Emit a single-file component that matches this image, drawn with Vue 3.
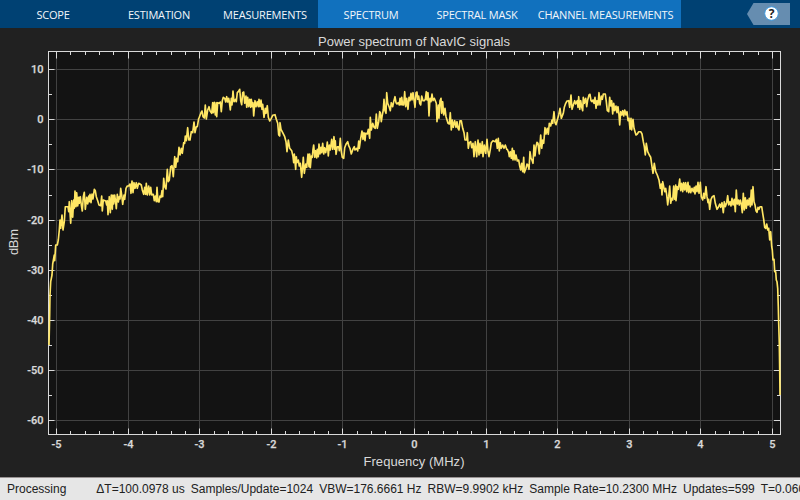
<script setup>
const tabs = [
  { label: 'SCOPE' },
  { label: 'ESTIMATION' },
  { label: 'MEASUREMENTS' },
  { label: 'SPECTRUM', context: true },
  { label: 'SPECTRAL MASK', context: true },
  { label: 'CHANNEL MEASUREMENTS', context: true, wide: true },
]

const status = [
  'ΔT=100.0978 us',
  'Samples/Update=1024',
  'VBW=176.6661 Hz',
  'RBW=9.9902 kHz',
  'Sample Rate=10.2300 MHz',
  'Updates=599',
  'T=0.0600',
]

const left = 48.5
const right = 780.5
const top = 51.5
const bottom = 434.5
const px = (f) => Math.floor(414.5 + f * 71.6) + 0.5
const py = (p) => Math.floor(119.8 - p * 5.014) + 0.5

const xMajor = Array.from({ length: 11 }, (_, i) => i - 5)
const yMajor = Array.from({ length: 8 }, (_, i) => 10 - i * 10)
const xMinor = Array.from({ length: 51 }, (_, i) => (i - 25) / 5).filter((v) => !Number.isInteger(v))
const yMinor = Array.from({ length: 7 }, (_, i) => 5 - i * 10)

// Trace sections: origin in pixels, samples in thirds of a pixel.
const sections = [
  [0, 200, '147,435 149,340 150,285 152,245 156,225 158,192 163,165 164,182 167,135 172,135 175,120'],
  [40, 80, '58,450 60,420 62,445 66,405 69,450 73,425 76,380 84,380 86,395 88,365 92,430 95,362 98,412 101,360 103,385 105,333 108,380 110,338 113,378 116,352 118,370 121,350 124,375 127,393 130,350 133,337 136,388 140,352 143,372 146,348 148,365 150,343 153,368 156,342 159,357 163,328 166,332 169,350 173,362 177,375 182,377 185,348 187,393 190,360 197,363 200,375 202,362 204,404 208,350 211,398 214,345 217,388 219,345 221,372 224,345 227,368 229,386 232,343 235,366 238,350 240,357 242,325 245,345 248,373 252,345 254,358 258,325 262,318 266,318 270,312 273,340 276,303 279,338 282,308 285,325 289,308 292,325 296,310 300,312 304,315 307,330 311,343 314,322 317,343 319,310 322,345 326,318 329,345 332,322 335,345 340,343 343,362 346,348 349,365 351,322 354,365 357,366 360,348 363,352 366,332 368,350 371,295 374,320 378,327 382,268 385,305 388,300 392,260 396,257 400,290 404,230 407,262 410,235 413,245 417,202 420,225 424,205 427,220 431,188 434,190 436,168 439,182 443,143 446,180 450,180 454,155 458,158 462,126 465,158 469,140 472,140 476,115'],
  [190, 80, '28,112 33,98 36,93 39,110 43,114 46,75 49,117 53,90 57,80 60,92 65,100 68,68 70,98 73,67 76,105 79,68 80,110 83,68 88,70 91,66 94,95 97,62 100,52 104,55 107,66 110,50 113,66 116,55 118,65 121,90 124,55 126,75 129,33 132,65 137,58 139,65 142,38 145,35 149,28 152,62 155,74 158,38 161,36 164,70 168,48 170,82 173,52 176,80 179,58 182,82 184,58 187,80 189,68 191,108 195,62 198,80 202,65 205,80 207,58 210,80 213,60 216,88 218,73 222,112 226,85 228,100 232,77 235,112 239,123 244,115 248,106 255,104 259,118 263,130 266,165 269,168 270,128 273,148 278,158 284,170 288,185 291,215 295,180 299,205 305,212 309,230 311,248 313,222 317,268 319,230 321,248 325,240 328,258 331,250 335,292 338,255 340,232 343,280 347,252 350,262 354,222 357,260 359,222 361,263 364,228 367,232 369,208 371,195 374,232 377,212 380,234 382,208 385,230 387,192 390,222 393,202 395,218 398,190 401,222 404,203 407,218 410,203 412,186 415,228 418,195 421,210 425,178 428,208 432,170 434,208 436,182 438,223 442,200 446,200 448,212 451,175 454,215 457,232 461,235 464,203 468,193 473,185 476,197 480,205 484,222 489,207 493,200 495,210 500,205 503,213 506,183 508,205 512,175 516,153 519,178 522,158 525,182 527,160 532,162 535,148 539,175 541,112 544,150 548,130 552,142 556,145 559,102 562,145 566,125 569,95'],
  [330, 80, '151,98 154,125 157,105 160,90 162,58 165,92 168,100 170,38 173,70 178,82 181,92 184,68 188,80 191,65 195,50 198,68 201,72 205,68 208,75 210,55 213,75 215,52 218,75 221,75 224,35 227,80 230,55 234,88 237,52 240,62 243,40 246,60 249,38 252,60 255,82 258,38 261,36 263,58 266,48 269,70 272,75 275,48 279,62 283,62 286,58 289,35 291,60 294,38 297,108 300,55 303,65 306,42 309,62 313,55 316,62 319,70 321,125 325,75 327,115 330,62 333,55 335,100 338,65 341,105 345,85 348,110 351,120 354,130 358,132 361,98 364,150 367,120 370,142 374,122 378,142 381,125 384,145 387,150 390,122 394,122 398,145 402,158 405,180 410,180 412,158 415,205 418,188 422,185 425,203 429,190 432,230 436,185 438,205 440,230 444,180 447,225 450,190 453,220 457,185 459,230 463,195 467,220 471,178 474,215 477,230 481,208 484,188 489,182 496,185 499,178 502,205 505,175 508,213 511,188 514,205 518,195 522,205 526,195 530,208'],
  [480, 80, '82,208 86,218 88,230 91,215 94,235 97,205 99,240 102,212 105,240 108,225 112,243 116,240 119,258 122,270 125,250 128,275 131,232 133,278 138,265 141,252 144,255 147,268 150,215 153,235 156,240 159,250 162,195 165,228 168,200 171,187 174,190 178,222 182,165 185,205 188,180 191,190 195,143 198,162 202,145 205,163 208,130 212,138 216,120 218,130 222,95 225,128 228,134 232,120 236,105 240,85 244,115 247,108 250,100 253,82 257,70 261,63 266,62 269,82 273,45 276,88 280,75 284,62 287,72 292,62 294,82 296,50 299,88 302,62 305,82 308,92 310,52 313,70 317,55 320,80 323,60 327,45 330,43 333,62 336,65 339,60 342,70 345,52 348,85 351,62 354,75 357,38 360,75 364,48 367,58 370,42 376,42 379,65 382,92 386,95 389,52 392,78 395,62 398,102 401,70 404,92 408,78 411,98 414,80 417,105 419,135 422,95 425,105 428,92 431,108 434,90 438,105 441,95 444,122 447,115 450,148 453,115 455,150 459,118 462,145 465,155 468,165 472,162 476,155 482,155 486,162 490,185 493,200 496,225 499,190 503,215 508,225 512,232 516,260 519,280 523,250 527,275 532,285 537,300 541,325 544,312 546,345 548,305 551,320 554,335 557,325 560,345 563,375'],
  [630, 150, '116,140 119,108 122,160 125,145 128,150 131,108 134,148 137,105 138,152 142,110 145,118 149,87 152,122 155,100 158,125 161,98 164,120 167,98 170,125 174,97 176,128 179,108 182,128 186,115 190,125 193,112 195,132 198,108 201,125 204,97 207,130 211,97 214,140 218,150 221,130 224,145 228,110 231,140 234,158 236,148 239,178 243,148 247,140 252,137 256,160 261,178 265,172 269,162 272,172 276,158 280,188 283,155 286,170 290,158 293,137 296,165 300,155 303,168 306,145 309,165 313,148 316,185 319,120 322,162 325,150 328,165 331,150 334,162 337,188 340,130 343,180 346,143 349,175 352,150 355,165 358,145 361,170 364,120 366,165 369,110 372,155 375,165 378,182 381,187 384,172 387,178 390,170 395,170 398,190 401,208 404,232 407,235 410,222 413,240 416,235 419,270 422,245 425,290'],
  [720, 210, '157,120 159,150 162,148 164,185 167,185 169,210 171,215 173,235 175,290 176,340 178,400 179,480 180,555'],
]

const trace = sections
  .flatMap(([ox, oy, samples]) =>
    samples.split(' ').map((s) => {
      const [x, y] = s.split(',').map(Number)
      return `${(ox + x / 3).toFixed(1)},${(oy + y / 3).toFixed(1)}`
    }),
  )
  .join(' ')
</script>

<template>
  <div class="window">
    <header class="toolstrip">
      <div
        v-for="tab in tabs"
        :key="tab.label"
        class="tab"
        :class="{ context: tab.context, wide: tab.wide }"
      >
        {{ tab.label }}
      </div>
      <div class="quick">
        <svg width="43" height="22" viewBox="0 0 43 22">
          <path d="M0 11 L6.5 0 H43 V22 H6.5 Z" fill="#668db0" />
          <circle cx="24.5" cy="10.5" r="6.8" fill="#fff" stroke="#3f9be0" stroke-width="1" />
          <text x="24.5" y="14.8" class="help" text-anchor="middle">?</text>
        </svg>
      </div>
    </header>

    <svg class="figure" width="800" height="449" viewBox="0 28 800 449">
      <rect :x="left" :y="top" :width="right - left" :height="bottom - top" fill="#131313" />
      <g class="grid">
        <line v-for="f in xMajor" :key="'gx' + f" :x1="px(f)" :x2="px(f)" :y1="top" :y2="bottom" />
        <line v-for="p in yMajor" :key="'gy' + p" :x1="left" :x2="right" :y1="py(p)" :y2="py(p)" />
      </g>
      <g class="axis">
        <rect :x="left" :y="top" :width="right - left" :height="bottom - top" fill="none" />
        <path v-for="f in xMajor" :key="'x' + f" :d="`M${px(f)} ${top}v7M${px(f)} ${bottom}v-6`" />
        <path v-for="p in yMajor" :key="'y' + p" :d="`M${left} ${py(p)}h6M${right} ${py(p)}h-6.5`" />
        <path v-for="f in xMinor" :key="'mx' + f" :d="`M${px(f)} ${top}v3.5M${px(f)} ${bottom}v-3.5`" />
        <path v-for="p in yMinor" :key="'my' + p" :d="`M${left} ${py(p)}h3.5M${right} ${py(p)}h-3.5`" />
      </g>
      <polyline class="trace" :points="trace" />
      <g class="ticks">
        <text v-for="f in xMajor" :key="'tx' + f" :x="px(f)" y="448" text-anchor="middle">{{ f }}</text>
        <text v-for="p in yMajor" :key="'ty' + p" x="43.5" :y="py(p) + 3.8" text-anchor="end">{{ p }}</text>
      </g>
      <g class="labels">
        <text x="414" y="46" text-anchor="middle" textLength="192">Power spectrum of NavIC signals</text>
        <text x="414" y="466" text-anchor="middle" textLength="101">Frequency (MHz)</text>
        <text transform="translate(18 242) rotate(-90)" text-anchor="middle" textLength="26">dBm</text>
      </g>
    </svg>

    <footer class="status">
      <span class="state">Processing</span>
      <span v-for="s in status" :key="s" class="item">{{ s }}</span>
    </footer>
  </div>
</template>

<style>
body {
  margin: 0;
  background: #212121;
}
</style>

<style scoped>
.window {
  width: 800px;
  height: 500px;
  display: flex;
  flex-direction: column;
  overflow: hidden;
  background: #212121;
}
.toolstrip {
  height: 28px;
  flex: none;
  display: flex;
  background: #004173;
}
.tab {
  width: 106px;
  height: 28px;
  line-height: 29px;
  text-align: center;
  white-space: nowrap;
  color: #f2f6fa;
  font-family: "Open Sans", sans-serif;
  font-size: 11px;
  letter-spacing: -0.2px;
}
.context {
  background: #1171be;
}
.wide {
  width: 151px;
}
.quick {
  flex: 1;
  display: flex;
  justify-content: flex-end;
  padding: 3px 10px 0 0;
}
.help {
  font: bold 12px "Open Sans", sans-serif;
  fill: #222;
}
.figure {
  display: block;
  flex: none;
}
.grid line {
  stroke: #424242;
}
.axis {
  stroke: #d9d9d9;
  fill: none;
}
.trace {
  fill: none;
  stroke: #ffe664;
  stroke-width: 1.65;
  stroke-linejoin: round;
}
.ticks text {
  font: 500 11px Roboto, sans-serif;
  fill: #d9d9d9;
  stroke: #d9d9d9;
  stroke-width: 0.25;
}
.labels text {
  font: 13px "Liberation Sans", sans-serif;
  fill: #d9d9d9;
}
.status {
  box-sizing: border-box;
  height: 23px;
  flex: none;
  display: flex;
  gap: 6px;
  padding-left: 7px;
  border-top: 1px solid #989292;
  background: #e6e6e6;
  color: #212121;
  font: 12px/22px "Liberation Sans", sans-serif;
  white-space: nowrap;
  overflow: hidden;
}
.state {
  flex: none;
  width: 83.3px;
}
.item {
  flex: none;
}
</style>
